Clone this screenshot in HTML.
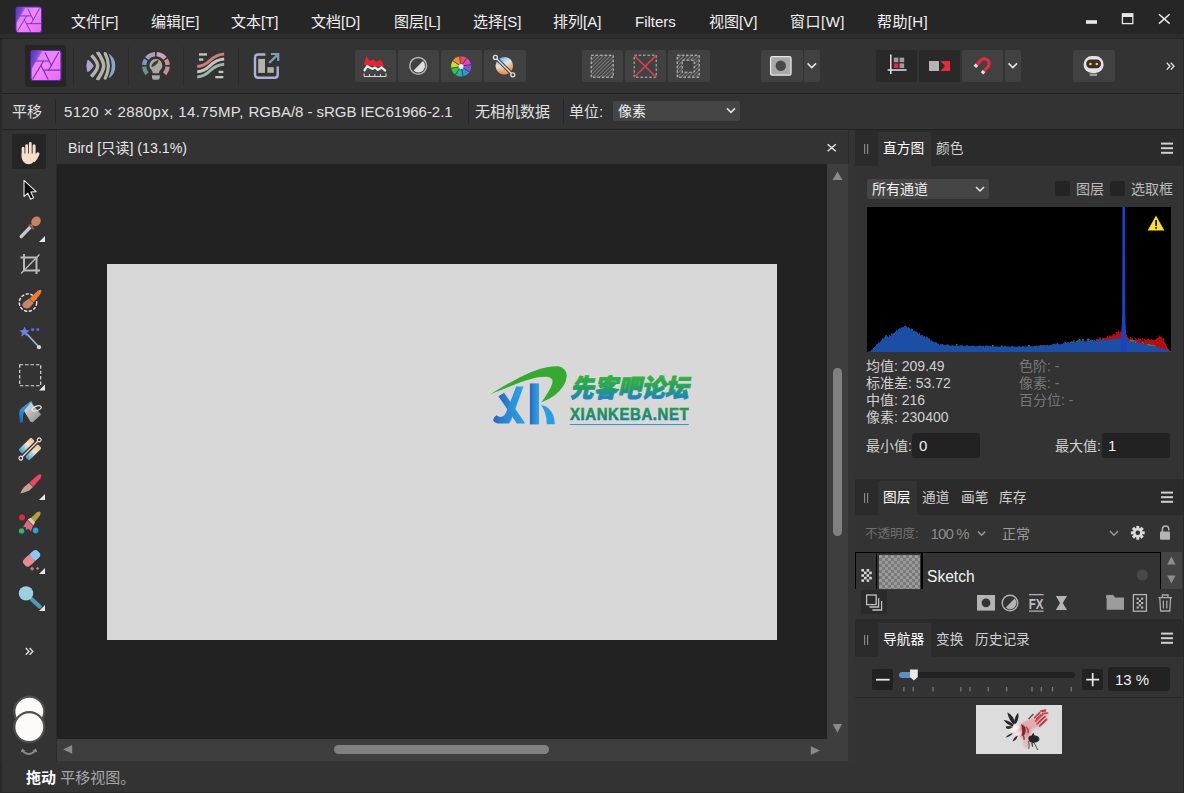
<!DOCTYPE html>
<html lang="zh-CN">
<head>
<meta charset="utf-8">
<title>Affinity Photo</title>
<style>
*{box-sizing:border-box;margin:0;padding:0}
html,body{width:1184px;height:793px;overflow:hidden;background:#333;}
body{position:relative;font-family:"Liberation Sans","Noto Sans CJK SC",sans-serif;font-size:15px;color:#e6e6e6;}
.abs{position:absolute}
svg{display:block;overflow:visible}
/* title bar */
#title{left:0;top:0;width:1184px;height:34px;background:#262626}
#titleline{left:0;top:34px;width:1184px;height:5px;background:#2d2d2d;border-bottom:1px solid #252525}
.menu{top:11px;height:22px;line-height:22px;font-size:15px;color:#f0f0f0;white-space:nowrap}
/* toolbar */
#toolbar{left:0;top:39px;width:1184px;height:54px;background:#333}
#tbline{left:0;top:93px;width:1184px;height:1px;background:#222}
.tb{top:50px;height:32px;width:41px;background:#414141;border-radius:2px}
.tb.dark{background:#292929}
.vsep{width:1px;background:#2a2a2a}
/* context bar */
#ctx{left:0;top:94px;width:1184px;height:35px;background:#333}
#ctxline{left:0;top:129px;width:1184px;height:1.5px;background:#222}
.ctxt{top:101px;height:22px;line-height:22px;font-size:15px;color:#e0e0e0;white-space:nowrap}
/* left tools */
#tools{left:0;top:130px;width:56px;height:632px;background:#333}
/* doc */
#tabbar{left:57px;top:130px;width:791px;height:34px;background:#333;border-top:1px solid #393939;border-left:1px solid #393939}
#canvas{left:57px;top:164px;width:770px;height:575px;background:#222}
#vscroll{left:827px;top:164px;width:21px;height:575px;background:#3e3e3e}
#hscroll{left:57px;top:739px;width:770px;height:22px;background:#3e3e3e}
#corner{left:827px;top:739px;width:21px;height:22px;background:#3e3e3e}
#img{left:107px;top:264px;width:670px;height:376px;background:#d8d8d8}
/* status */
#status{left:0;top:762px;width:1184px;height:31px;background:#333}
/* right */
#right{left:855px;top:130px;width:329px;height:632px;background:#333}
.phead{left:855px;width:329px;height:34px;background:#2b2b2b}
.ptab{font-size:13.7px;color:#cfcfcf;height:34px;line-height:34px;white-space:nowrap}
.ptab.act{background:#333;color:#fff;text-align:left;padding-left:5px}
.small{font-size:14px;white-space:nowrap;line-height:17px}
</style>
</head>
<body>
<!-- TITLE BAR -->
<div id="title" class="abs"></div>
<div id="titleline" class="abs"></div>
<div id="toolbar" class="abs"></div>
<div id="tbline" class="abs"></div>
<div id="ctx" class="abs"></div>
<div id="ctxline" class="abs"></div>
<div id="tools" class="abs"></div>
<div id="tabbar" class="abs"></div>
<div id="canvas" class="abs"></div>
<div id="vscroll" class="abs"></div>
<div id="hscroll" class="abs"></div>
<div id="corner" class="abs"></div>
<div id="img" class="abs"></div>
<div id="status" class="abs"></div>
<div id="right" class="abs"></div>

<!-- MENU -->
<div class="abs menu" style="left:71px">文件[F]</div>
<div class="abs menu" style="left:151px">编辑[E]</div>
<div class="abs menu" style="left:231px">文本[T]</div>
<div class="abs menu" style="left:311px">文档[D]</div>
<div class="abs menu" style="left:394px">图层[L]</div>
<div class="abs menu" style="left:473px">选择[S]</div>
<div class="abs menu" style="left:553px">排列[A]</div>
<div class="abs menu" style="left:635px">Filters</div>
<div class="abs menu" style="left:709px">视图[V]</div>
<div class="abs menu" style="left:790px;letter-spacing:0.5px">窗口[W]</div>
<div class="abs menu" style="left:877px;letter-spacing:0.4px">帮助[H]</div>

<!-- CONTEXT BAR TEXT -->
<div class="abs ctxt" style="left:12px">平移</div>
<div class="abs ctxt" style="left:64px"><span style="letter-spacing:0.42px">5120 × 2880px, 14.75MP, </span><span style="letter-spacing:-0.04px">RGBA/8 - sRGB IEC61966-2.1</span></div>
<div class="abs ctxt" style="left:475px">无相机数据</div>
<div class="abs ctxt" style="left:569px">单位:</div>

<!-- STATUS -->
<div class="abs" style="left:26px;top:767px;font-size:15px;line-height:22px;white-space:nowrap;color:#a8a8a8"><b style="color:#fff">拖动</b> 平移视图。</div>

<!-- DOC TAB -->
<div class="abs" style="left:68px;top:137px;font-size:14.2px;line-height:22px;white-space:nowrap;color:#e6e6e6">Bird [只读] (13.1%)</div>


<!-- LEFT TOOLS -->
<div class="abs" style="left:0;top:39px;width:1.5px;height:754px;background:#282828"></div>
<div class="abs" style="left:0;top:130px;width:2px;height:632px;background:#2b2b2b"></div>
<div class="abs" style="left:12px;top:134px;width:34px;height:35px;background:#252525;border-radius:2px"></div>
<svg class="abs" style="left:0;top:0" width="1184" height="793" viewBox="0 0 1184 793">
 <!-- hand -->
 <g fill="#f3dfcc">
  <rect x="21.7" y="146.8" width="2.8" height="12" rx="1.4"/>
  <rect x="25.3" y="144.2" width="2.8" height="14" rx="1.4"/>
  <rect x="28.9" y="142" width="2.8" height="16" rx="1.4"/>
  <rect x="32.6" y="144.2" width="3" height="14" rx="1.5"/>
  <path d="M21.7 153.4 H35.6 V156.8 a6.95 7.4 0 0 1 -13.9 0 Z"/>
  <path d="M38.6 152.4 q1.4 0.6 0.8 2 q-1.6 4.6 -5 8 l-1.8 -3.6 l3.6 -5.4 q1 -1.6 2.4 -1z"/>
 </g>
 <!-- arrow -->
 <path d="M24 180.3 L24 196.6 L27.8 193.2 L30.6 199.2 L33.6 197.8 L30.8 192 L36.2 191.6 Z" fill="#0a0a0a" stroke="#e8e8e8" stroke-width="1.1" stroke-linejoin="round"/>
 <!-- color picker -->
 <g>
  <line x1="21.2" y1="236.6" x2="31" y2="226.4" stroke="#c9c9c9" stroke-width="3.4" stroke-linecap="round"/>
  <line x1="29.6" y1="225" x2="33.2" y2="228.6" stroke="#8a5a48" stroke-width="2.2" stroke-linecap="round"/>
  <ellipse cx="36" cy="221.4" rx="5.2" ry="4.4" transform="rotate(-45 36 221.4)" fill="#c8805e"/>
  <path d="M45 236 V242 H39 Z" fill="#e8e8e8"/>
 </g>
 <!-- crop -->
 <g stroke="#b9b9b9" stroke-width="2" fill="none">
  <path d="M24 254 V270.5 H40"/>
  <path d="M20.5 257.5 H36.5 V274"/>
  <line x1="21" y1="273.5" x2="39.5" y2="254.5" stroke-width="1.4"/>
 </g>
 <!-- selection brush -->
 <g>
  <circle cx="28" cy="302.6" r="8.7" fill="none" stroke="#e6efe9" stroke-width="1.4" stroke-dasharray="3.2 1.6"/>
  <path d="M29.6 298.4 L37.4 291 Q40.2 289.2 41.2 290 Q42 291.2 40.4 294 L33.6 302.6 Z" fill="#f07c2a"/>
  <path d="M29.2 298.6 L33.6 303 L29.6 307.8 Q25.6 309.4 23.2 307 Q21.6 304.6 23.6 302.2 Z" fill="#c4866a"/>
 </g>
 <!-- wand -->
 <g>
  <line x1="27" y1="334" x2="38.6" y2="346.6" stroke="#9fb4c8" stroke-width="1.6"/>
  <circle cx="39" cy="347.2" r="2.1" fill="#d8d8d8"/>
  <path d="M24.6 326.6 L26 330 L29.6 330.4 L27 332.8 L27.8 336.4 L24.6 334.6 L21.2 336.4 L22 332.8 L19.4 330.4 L23 330 Z" fill="#6f7ee0"/>
  <circle cx="32.6" cy="329.6" r="1.7" fill="#5e6ad0"/>
  <circle cx="37.8" cy="329.6" r="1.5" fill="#5e6ad0"/>
 </g>
 <!-- marquee -->
 <rect x="19.7" y="364.7" width="21" height="21" fill="none" stroke="#e0e0e0" stroke-width="1.15" stroke-dasharray="3.4 2"/>
 <path d="M45 384.5 V390.5 H39 Z" fill="#e8e8e8"/>
 <!-- flood fill -->
 <g>
  <defs><linearGradient id="bk" x1="0" y1="0" x2="1" y2="1"><stop offset="0" stop-color="#e4e4e4"/><stop offset="0.5" stop-color="#b4b4b4"/><stop offset="1" stop-color="#8c8c8c"/></linearGradient>
  <linearGradient id="pt" x1="0" y1="0" x2="0" y2="1"><stop offset="0" stop-color="#38a4ec"/><stop offset="1" stop-color="#1c6cb8"/></linearGradient></defs>
  <path d="M31.4 400.8 L21.6 408 Q19 410 19.2 413 L20 422.4 L23 422.2 Q22.6 415 24.2 411.4 L32.8 404 Z" fill="url(#pt)"/>
  <path d="M31 402.6 L41.2 414.4 L33 422 Q31.6 422.6 30.4 421.4 L24.4 411.6 Q24 410.4 25 409.4 Z" fill="url(#bk)"/>
  <ellipse cx="36.6" cy="408.4" rx="4.8" ry="2.2" transform="rotate(-20 36.6 408.4)" fill="none" stroke="#e8e8e8" stroke-width="1.2"/>
 </g>
 <!-- gradient tool -->
 <g>
  <defs>
   <linearGradient id="gr1" x1="0" y1="0" x2="1" y2="0"><stop offset="0" stop-color="#f2c48a"/><stop offset="0.45" stop-color="#f0e4d2"/><stop offset="1" stop-color="#3c9ad8"/></linearGradient>
  </defs>
  <g transform="rotate(-45 30 449)">
   <rect x="21" y="441.4" width="18" height="5.6" rx="1.6" fill="url(#gr1)" transform="rotate(180 30 444.2)"/>
   <rect x="21" y="451" width="18" height="5.6" rx="1.6" fill="url(#gr1)" transform="rotate(180 30 453.8)"/>
   <line x1="18.4" y1="449" x2="41.6" y2="449" stroke="#e8dcd6" stroke-width="1.3"/>
   <circle cx="17" cy="449" r="1.9" fill="#333" stroke="#e8dcd6" stroke-width="1.2"/>
   <circle cx="43" cy="449" r="1.9" fill="#333" stroke="#e8dcd6" stroke-width="1.2"/>
  </g>
 </g>
 <!-- paint brush -->
 <g>
  <path d="M29.4 482.6 L37.4 475.4 Q40.2 473.8 41.2 474.6 Q42 475.8 40.4 478.6 L33.4 486.8 Z" fill="#ee4460"/>
  <path d="M29 483 L33 487 L29.4 490.6 Q25 492.8 20.4 493.4 Q21.6 489.6 24.6 486.6 Z" fill="#c8a098"/>
  <path d="M45 494 V500 H39 Z" fill="#e8e8e8"/>
 </g>
 <!-- colour replacement brush -->
 <g>
  <circle cx="22" cy="517.4" r="3" fill="#e0264a"/>
  <circle cx="21.6" cy="531" r="2.8" fill="#2db56a"/>
  <circle cx="35.6" cy="530.4" r="2.8" fill="#28a4e4"/>
  <path d="M30.4 518.4 L36.6 512.4 Q39.4 511 40.4 512 Q41.2 513.4 39.6 516 L34.4 522.6 Z" fill="#a8a838"/>
  <path d="M27.6 519.6 L30.6 517.8 L35 522.2 L33.4 525.4 Z" fill="#ecc4b4"/>
  <path d="M27.2 520 L33 525.8 L30.8 531.6 L28.6 528.6 L26.6 530.2 L25.6 527 L23 527.2 Z" fill="#d46c7c"/>
 </g>
 <!-- eraser -->
 <g>
  <g transform="rotate(-42 32 558)">
   <rect x="22" y="553.6" width="10.4" height="8.8" rx="3.4" fill="#e88c94"/>
   <rect x="27" y="553.6" width="5.4" height="8.8" fill="#e88c94"/>
   <rect x="32.4" y="553.6" width="8.6" height="8.8" rx="3.6" fill="#8cc8f4"/>
   <rect x="32.4" y="553.6" width="4" height="8.8" fill="#8cc8f4"/>
  </g>
  <rect x="30.6" y="567.2" width="3" height="3" transform="rotate(45 32.1 568.7)" fill="#c8787c"/>
  <rect x="36.4" y="567.2" width="2.4" height="2.4" transform="rotate(45 37.6 568.4)" fill="#c8787c"/>
  <path d="M45 568 V574 H39 Z" fill="#e8e8e8"/>
 </g>
 <!-- zoom -->
 <g>
  <line x1="32" y1="599.4" x2="39.6" y2="606.6" stroke="#4f9ab4" stroke-width="4.2" stroke-linecap="round"/>
  <circle cx="26" cy="593.4" r="7.2" fill="#9ccfdf"/>
  <path d="M45 605 V611 H39 Z" fill="#e8e8e8"/>
 </g>
 <!-- more -->
 <g stroke="#e8e8e8" stroke-width="1.3" fill="none">
  <path d="M25.8 648 L29 651.4 L25.8 654.8"/>
  <path d="M29.6 648 L32.8 651.4 L29.6 654.8"/>
 </g>
 <!-- colour wells -->
 <circle cx="29.3" cy="711.6" r="15" fill="#fdfafa" stroke="#4e4e4e" stroke-width="2.2"/>
 <circle cx="29.3" cy="727.1" r="15" fill="#fdfafa" stroke="#4e4e4e" stroke-width="2.2"/>
 <path d="M22.4 750.6 Q28.8 757.6 35.2 750.6" fill="none" stroke="#8a8a8a" stroke-width="1.6"/>
 <path d="M20.8 752.6 L22 748.4 L25.6 750.8 Z" fill="#8a8a8a"/>
 <path d="M37.2 752.6 L36 748.4 L32.4 750.8 Z" fill="#8a8a8a"/>
</svg>

<!-- TOOLBAR -->
<div class="abs" style="left:25px;top:45px;width:41px;height:42px;background:#252525;border-radius:2px"></div>
<div class="abs vsep" style="left:73px;top:47px;height:39px"></div>
<div class="abs vsep" style="left:128px;top:47px;height:39px"></div>
<div class="abs vsep" style="left:183px;top:47px;height:39px"></div>
<div class="abs vsep" style="left:238px;top:47px;height:39px"></div>
<div class="abs tb" style="left:355px"></div><div class="abs tb" style="left:398px"></div><div class="abs tb" style="left:441px"></div><div class="abs tb" style="left:484px;width:42px"></div>
<div class="abs tb" style="left:582px"></div><div class="abs tb" style="left:625px"></div><div class="abs tb" style="left:668px;width:42px"></div>
<div class="abs tb" style="left:761px;width:42px"></div><div class="abs tb" style="left:804px;width:16px"></div>
<div class="abs tb dark" style="left:876px"></div><div class="abs tb dark" style="left:919px"></div><div class="abs tb" style="left:962px"></div><div class="abs tb" style="left:1005px;width:16px"></div>
<div class="abs tb" style="left:1073px;width:42px"></div>
<svg class="abs" style="left:0;top:0" width="1184" height="793" viewBox="0 0 1184 793">
 <defs>
  <linearGradient id="lg1" x1="0" y1="0" x2="1" y2="1"><stop offset="0" stop-color="#d884f8"/><stop offset="0.5" stop-color="#f084fa"/><stop offset="1" stop-color="#e868f4"/></linearGradient>
  <linearGradient id="lg2" x1="0" y1="0" x2="0.75" y2="0.45"><stop offset="0" stop-color="#5a34bc"/><stop offset="0.55" stop-color="#7444d0"/><stop offset="1" stop-color="#a860e4"/></linearGradient>
  <g id="aflogo">
   <rect x="0" y="0" width="30" height="30" rx="2.6" fill="url(#lg1)" stroke="#5c30a8" stroke-width="1.2"/>
   <path d="M0.6 0 H11.6 L0 19.5 V2 Q0 0 0.6 0 Z" fill="url(#lg2)"/>
   
   <g stroke="#7a2cb4" stroke-width="1.1" fill="none" stroke-linecap="round">
    <path d="M5.4 10.5 H17.6"/>
    <path d="M14.1 2.3 L20.3 15.1"/>
    <path d="M27.6 2 L17.7 19.6"/>
    <path d="M12.5 19.6 H29.4"/>
    <path d="M9.9 15.1 L17 28.6"/>
    <path d="M12.5 10.5 L2 28"/>
   </g>
  </g>
 </defs>
 <!-- title logo -->
 <g transform="translate(16,7) scale(0.85)"><use href="#aflogo"/></g>
 <!-- persona: photo -->
 <g transform="translate(31,50.5)"><use href="#aflogo"/></g>
 <!-- persona: liquify -->
 <clipPath id="lqc"><circle cx="101" cy="66" r="14.6"/></clipPath>
 <g clip-path="url(#lqc)" fill="none" stroke-linecap="round" stroke-linejoin="round">
  <path d="M85 59.6 Q89 60 93 65.8 Q89 71.8 85 72.2 Z" fill="#b0a4cc" stroke="#b0a4cc" stroke-width="1.4"/>
  <path d="M91.8 55.6 Q97.7 62 97.7 65.8 Q97.7 69.6 91.8 76" stroke="#b2b4aa" stroke-width="3.5"/>
  <path d="M97.8 52.4 Q103.7 61 103.7 65.8 Q103.7 70.6 97.8 79.2" stroke="#b2b4aa" stroke-width="3.5"/>
  <path d="M105.2 53.4 Q111.6 65.8 105.2 78.2" stroke="#b2b4aa" stroke-width="3.2"/>
  <path d="M110.6 54 Q116.6 65.8 110.6 77.6" stroke="#88a6c6" stroke-width="3.6"/>
 </g>
 <!-- persona: develop -->
 <g fill="none" stroke-width="4.3">
  <path d="M155.08 54.03 A11.8 11.8 0 0 0 146.73 58.37" stroke="#ac9cc4"/>
  <path d="M165.07 58.37 A11.8 11.8 0 0 0 156.72 54.03" stroke="#cca4b8"/>
  <path d="M167.67 64.98 A11.8 11.8 0 0 0 165.91 59.55" stroke="#cc948c"/>
  <path d="M164.67 73.70 A11.8 11.8 0 0 0 167.67 66.62" stroke="#c89094"/>
  <path d="M145.89 59.55 A11.8 11.8 0 0 0 144.13 64.98" stroke="#749cc4"/>
  <path d="M144.13 66.62 A11.8 11.8 0 0 0 147.13 73.70" stroke="#64948c"/>
 </g>
 <path d="M155.9 59 a6.4 6.4 0 0 1 4.1 11.3 q-0.9 0.9 -0.9 3 h-6.4 q0 -2.1 -0.9 -3 a6.4 6.4 0 0 1 4.1 -11.3z" fill="#a8aaa2"/>
 <path d="M151.8 66.6 Q152.6 62 158.2 60.6 Q157.4 64.8 151.8 66.6 Z" fill="#3a3a38" stroke="#3a3a38" stroke-width="1" stroke-linejoin="round"/>
 <path d="M152 75.2 H159.8 V77.4 Q159.8 79.8 157.4 79.8 H154.4 Q152 79.8 152 77.4 Z" fill="#a8aaa2"/>
 <!-- persona: tone mapping -->
 <g fill="none" stroke-width="3" stroke-linecap="butt">
  <path d="M197.2 66.6 Q204 66.2 209.8 60.6 Q216.4 54.4 224.2 53.9" stroke="#c87c84"/>
  <path d="M197.2 71.8 Q204 71.4 209.8 65.8 Q216.4 59.6 224.2 59.1" stroke="#c4c6be"/>
  <path d="M197.2 77 Q204 76.6 209.8 71 Q216.4 64.8 224.2 64.3" stroke="#9cb8ac"/>
 </g>
 <g fill="#c6c6c2">
  <rect x="199" y="53.3" width="8" height="2.3"/><rect x="199" y="58.4" width="4.3" height="2.3"/>
  <rect x="218.6" y="70.8" width="4.7" height="2.3"/><rect x="215.3" y="76" width="8" height="2.3"/>
 </g>
 <!-- persona: export -->
 <g>
  <path d="M265.4 54.5 H258 Q255 54.5 255 57.5 V74.7 Q255 77.7 258 77.7 H274.7 Q277.7 77.7 277.7 74.7 V66.4" fill="none" stroke="#aeb2da" stroke-width="2.4"/>
  <rect x="258.2" y="58.9" width="6.8" height="14" fill="#b2b2a8"/>
  <rect x="267.4" y="67.2" width="6.4" height="5.6" fill="#b2b2a8"/>
  <path d="M269.2 63 L277.6 54.6 M271 54 H278.2 V61" fill="none" stroke="#78a0b4" stroke-width="2.2"/>
 </g>
 <!-- auto levels -->
 <g>
  <path d="M364 71.4 L367.2 66 L372.3 68.8 L375.1 67.4 L377.9 69.8 L381.6 67.4 L385.8 71.4 V73 H364 Z" fill="#3b4848"/>
  <path d="M363.9 64.6 L366.3 56 L370 61.2 L373.2 59.3 L376.5 62.1 L380.2 59.8 L382.5 62.6 L383.9 66.4 L378 66.8 L372 65.8 L367.4 65.2 Z" fill="#ea2238"/>
  <path d="M364 71.2 L367.2 66.2 L372.3 68.9 L375.1 67.5 L377.9 69.9 L381.6 67.5 L385.8 71.2" fill="none" stroke="#f2eeea" stroke-width="2.2" stroke-linejoin="round"/>
  <path d="M364.1 73.4 V76.5 H386 V73.4 M369.4 74 V76.5 M374.8 74 V76.5 M380.4 74 V76.5" fill="none" stroke="#ecd4d0" stroke-width="1"/>
 </g>
 <!-- auto contrast -->
 <circle cx="418.2" cy="65.8" r="8.4" fill="none" stroke="#b4b4b4" stroke-width="1.5"/>
 <path d="M413.6 70.6 L423 61 A 6.6 6.6 0 0 1 413.6 70.6 Z" fill="#e0e0e0"/>
 <!-- auto colours -->
 <g transform="translate(461.1,66.4)" stroke="#414141" stroke-width="0.7">
  <path d="M0 0 L-1.82 -10.34 A10.5 10.5 0 0 1 6.02 -8.60 Z" fill="#f04464"/>
  <path d="M0 0 L6.02 -8.60 A10.5 10.5 0 0 1 10.34 -1.82 Z" fill="#e040c4"/>
  <path d="M0 0 L10.34 -1.82 A10.5 10.5 0 0 1 8.60 6.02 Z" fill="#8c50e0"/>
  <path d="M0 0 L8.60 6.02 A10.5 10.5 0 0 1 1.82 10.34 Z" fill="#2c94e4"/>
  <path d="M0 0 L1.82 10.34 A10.5 10.5 0 0 1 -6.02 8.60 Z" fill="#24b8a0"/>
  <path d="M0 0 L-6.02 8.60 A10.5 10.5 0 0 1 -10.34 1.82 Z" fill="#30c450"/>
  <path d="M0 0 L-10.34 1.82 A10.5 10.5 0 0 1 -8.60 -6.02 Z" fill="#c4e030"/>
  <path d="M0 0 L-8.60 -6.02 A10.5 10.5 0 0 1 -1.82 -10.34 Z" fill="#f09030"/>
  <circle r="2.5" fill="#ece8ec" stroke="none"/>
 </g>
 <!-- auto white balance -->
 <g>
  <defs>
   <linearGradient id="wbg" x1="0" y1="0" x2="0" y2="1"><stop offset="0.15" stop-color="#48a4e4"/><stop offset="0.5" stop-color="#e4e4e4"/><stop offset="0.9" stop-color="#ec9450"/></linearGradient>
   <linearGradient id="wbg2" x1="0.2" y1="0" x2="0.9" y2="0.8"><stop offset="0" stop-color="#48a4e4"/><stop offset="0.3" stop-color="#a8d0ec"/><stop offset="0.55" stop-color="#e8e4e0"/><stop offset="0.85" stop-color="#f0a060"/><stop offset="1" stop-color="#e89050"/></linearGradient>
   <clipPath id="wbl"><path d="M480 40 L495.5 57.5 L512.7 74.7 L530 92 H480 Z"/></clipPath>
   <clipPath id="wbr"><path d="M480 40 L495.5 57.5 L512.7 74.7 L530 92 V40 Z"/></clipPath>
  </defs>
  <circle cx="504.3" cy="65.8" r="8.8" fill="url(#wbg)" clip-path="url(#wbl)"/>
  <circle cx="504.3" cy="65.8" r="8.8" fill="url(#wbg2)" clip-path="url(#wbr)"/>
  <line x1="496" y1="58" x2="512.2" y2="74.2" stroke="#414141" stroke-width="3.4"/>
  <line x1="496" y1="58" x2="512.2" y2="74.2" stroke="#e6e0dc" stroke-width="1.3"/>
  <circle cx="495.4" cy="57.4" r="2" fill="#414141" stroke="#e6e0dc" stroke-width="1.3"/>
  <circle cx="512.8" cy="74.8" r="2" fill="#414141" stroke="#e6e0dc" stroke-width="1.3"/>
 </g>
 <!-- select all -->
 <defs>
  <pattern id="hatch" width="2.6" height="2.6" patternUnits="userSpaceOnUse" patternTransform="rotate(-45)"><rect width="2.6" height="1" fill="#7c7c7c"/></pattern>
 </defs>
 <rect x="591.2" y="55.2" width="22" height="22" fill="url(#hatch)"/>
 <rect x="591.2" y="55.2" width="22" height="22" fill="none" stroke="#dadada" stroke-width="0.9" stroke-dasharray="2.6 1.8"/>
 <!-- deselect -->
 <rect x="634.2" y="55.2" width="22" height="22" fill="none" stroke="#cfcfcf" stroke-width="0.9" stroke-dasharray="2.6 1.8"/>
 <path d="M634.4 55.6 L656 77 M656 55.6 L634.4 77" stroke="#dc3c52" stroke-width="1.5"/>
 <!-- invert selection -->
 <path d="M677.2 55.2 h22 v22 h-22 z M682.2 60.2 v12 h12 v-12 z" fill="url(#hatch)" fill-rule="evenodd"/>
 <rect x="677.2" y="55.2" width="22" height="22" fill="none" stroke="#dadada" stroke-width="0.9" stroke-dasharray="2.6 1.8"/>
 <rect x="682.2" y="60.2" width="12" height="12" fill="none" stroke="#dadada" stroke-width="0.9" stroke-dasharray="2.6 1.8"/>
 <!-- quick mask -->
 <rect x="770.6" y="56.6" width="20.4" height="18.6" rx="1.6" fill="#a8a8a8" stroke="#e8e8e8" stroke-width="1.3"/>
 <circle cx="780.8" cy="65.8" r="5.2" fill="#484848"/>
 <path d="M807.6 63.4 L811.8 67.6 L816 63.4" fill="none" stroke="#e4e4e4" stroke-width="1.5"/>
 <!-- force pixel alignment -->
 <g>
  <path d="M890.8 54.6 V74 M887.6 70 H906.6" stroke="#e4e4e4" stroke-width="1.5" fill="none"/>
  <rect x="893.8" y="57.6" width="4.6" height="4.6" fill="#9c9c9c"/><rect x="899.6" y="57.6" width="4.6" height="4.6" fill="#9c9c9c"/>
  <rect x="893.8" y="63.4" width="4.6" height="4.6" fill="#e0283c"/><rect x="899.6" y="63.4" width="4.6" height="4.6" fill="#9c9c9c"/>
 </g>
 <!-- move by whole pixels -->
 <rect x="929" y="61" width="10" height="10" fill="#b4b4b4"/>
 <path d="M940.4 61 H950 V71 H940.4 L945 66 Z" fill="#e8283c"/>
 <!-- snapping -->
 <g transform="translate(982.4 65.8) rotate(42) scale(0.86) translate(-983 -68)">
  <path d="M977.4 72 V64.6 A5.6 5.6 0 0 1 988.6 64.6 V72" fill="none" stroke="#e8283c" stroke-width="3.6"/>
  <rect x="975.4" y="71.4" width="4" height="3.4" fill="#e4e4e4"/>
  <rect x="986.6" y="71.4" width="4" height="3.4" fill="#e4e4e4"/>
 </g>
 <path d="M1008.6 63.4 L1012.8 67.6 L1017 63.4" fill="none" stroke="#e4e4e4" stroke-width="1.5"/>
 <!-- assistant -->
 <g>
  <rect x="1083.6" y="56" width="20" height="17" rx="8.2" fill="#e4e0e4"/>
  <rect x="1086.2" y="59.6" width="14.8" height="8.6" rx="4.2" fill="#3a3020"/>
  <circle cx="1090.4" cy="64" r="1.35" fill="#ecc878"/><circle cx="1096.8" cy="64" r="1.35" fill="#ecc878"/>
  <rect x="1089.6" y="73.4" width="7.6" height="2.6" rx="0.6" fill="#9c9c9c"/>
 </g>
 <!-- toolbar overflow -->
 <g stroke="#e8e8e8" stroke-width="1.3" fill="none">
  <path d="M1166.8 62.8 L1170 66.2 L1166.8 69.6"/><path d="M1170.8 62.8 L1174 66.2 L1170.8 69.6"/>
 </g>
 <!-- window controls -->
 <rect x="1086" y="20.2" width="11" height="3.6" fill="#e8e8e8"/>
 <rect x="1122.4" y="13.8" width="10.4" height="9.8" fill="none" stroke="#e8e8e8" stroke-width="1.3"/>
 <rect x="1122.4" y="13.8" width="10.4" height="3.2" fill="#e8e8e8"/>
 <path d="M1159 14.2 L1169.6 23.6 M1169.6 14.2 L1159 23.6" stroke="#e8e8e8" stroke-width="1.5"/>
</svg>

<!-- RIGHT PANELS -->
<div class="abs" style="left:848px;top:130px;width:7px;height:632px;background:#343434"></div><div class="abs" style="left:848px;top:130px;width:1px;height:34px;background:#2a2a2a"></div>

<!-- histogram panel -->
<div class="abs phead" style="top:130px;height:36px"></div>
<div class="abs ptab act" style="left:878px;top:132px;width:53px;height:34px;line-height:34px">直方图</div>
<div class="abs ptab" style="left:936px;top:132px;line-height:34px">颜色</div>
<div class="abs" style="left:867px;top:179px;width:122px;height:20px;background:#454545;border-radius:2px"></div>
<div class="abs small" style="left:872px;top:180px;color:#f0f0f0;line-height:18px">所有通道</div>
<div class="abs" style="left:1055px;top:181px;width:15px;height:15px;background:#242424;border-radius:2px"></div>
<div class="abs small" style="left:1076px;top:180px;color:#bcbcbc;line-height:18px">图层</div>
<div class="abs" style="left:1110px;top:181px;width:15px;height:15px;background:#242424;border-radius:2px"></div>
<div class="abs small" style="left:1131px;top:180px;color:#bcbcbc;line-height:18px">选取框</div>
<div class="abs" style="left:867px;top:207px;width:304px;height:145px;background:#000"></div>
<svg class="abs" style="left:867px;top:207px" width="304" height="145" viewBox="0 0 304 145">
 <path d="M0 145 L0 145.0 L1 145.0 L1 145.0 L2 145.0 L2 145.0 L3 145.0 L3 145.0 L4 145.0 L4 145.0 L5 145.0 L5 145.0 L6 145.0 L6 145.0 L7 145.0 L7 145.0 L8 145.0 L8 145.0 L9 145.0 L9 145.0 L10 145.0 L10 145.0 L11 145.0 L11 145.0 L12 145.0 L12 145.0 L13 145.0 L13 145.0 L14 145.0 L14 145.0 L15 145.0 L15 145.0 L16 145.0 L16 145.0 L17 145.0 L17 145.0 L18 145.0 L18 145.0 L19 145.0 L19 145.0 L20 145.0 L20 145.0 L21 145.0 L21 145.0 L22 145.0 L22 145.0 L23 145.0 L23 145.0 L24 145.0 L24 145.0 L25 145.0 L25 145.0 L26 145.0 L26 145.0 L27 145.0 L27 145.0 L28 145.0 L28 145.0 L29 145.0 L29 145.0 L30 145.0 L30 145.0 L31 145.0 L31 145.0 L32 145.0 L32 145.0 L33 145.0 L33 145.0 L34 145.0 L34 145.0 L35 145.0 L35 145.0 L36 145.0 L36 145.0 L37 145.0 L37 145.0 L38 145.0 L38 145.0 L39 145.0 L39 145.0 L40 145.0 L40 145.0 L41 145.0 L41 145.0 L42 145.0 L42 145.0 L43 145.0 L43 145.0 L44 145.0 L44 145.0 L45 145.0 L45 145.0 L46 145.0 L46 145.0 L47 145.0 L47 145.0 L48 145.0 L48 145.0 L49 145.0 L49 145.0 L50 145.0 L50 145.0 L51 145.0 L51 145.0 L52 145.0 L52 145.0 L53 145.0 L53 145.0 L54 145.0 L54 145.0 L55 145.0 L55 145.0 L56 145.0 L56 145.0 L57 145.0 L57 145.0 L58 145.0 L58 145.0 L59 145.0 L59 145.0 L60 145.0 L60 145.0 L61 145.0 L61 145.0 L62 145.0 L62 145.0 L63 145.0 L63 145.0 L64 145.0 L64 145.0 L65 145.0 L65 145.0 L66 145.0 L66 145.0 L67 145.0 L67 145.0 L68 145.0 L68 145.0 L69 145.0 L69 145.0 L70 145.0 L70 145.0 L71 145.0 L71 145.0 L72 145.0 L72 145.0 L73 145.0 L73 145.0 L74 145.0 L74 145.0 L75 145.0 L75 145.0 L76 145.0 L76 145.0 L77 145.0 L77 145.0 L78 145.0 L78 145.0 L79 145.0 L79 145.0 L80 145.0 L80 145.0 L81 145.0 L81 145.0 L82 145.0 L82 145.0 L83 145.0 L83 145.0 L84 145.0 L84 145.0 L85 145.0 L85 145.0 L86 145.0 L86 145.0 L87 145.0 L87 145.0 L88 145.0 L88 145.0 L89 145.0 L89 145.0 L90 145.0 L90 145.0 L91 145.0 L91 145.0 L92 145.0 L92 145.0 L93 145.0 L93 145.0 L94 145.0 L94 145.0 L95 145.0 L95 145.0 L96 145.0 L96 145.0 L97 145.0 L97 145.0 L98 145.0 L98 145.0 L99 145.0 L99 145.0 L100 145.0 L100 145.0 L101 145.0 L101 145.0 L102 145.0 L102 145.0 L103 145.0 L103 145.0 L104 145.0 L104 145.0 L105 145.0 L105 145.0 L106 145.0 L106 145.0 L107 145.0 L107 145.0 L108 145.0 L108 145.0 L109 145.0 L109 145.0 L110 145.0 L110 145.0 L111 145.0 L111 145.0 L112 145.0 L112 145.0 L113 145.0 L113 145.0 L114 145.0 L114 145.0 L115 145.0 L115 145.0 L116 145.0 L116 145.0 L117 145.0 L117 145.0 L118 145.0 L118 145.0 L119 145.0 L119 145.0 L120 145.0 L120 145.0 L121 145.0 L121 145.0 L122 145.0 L122 145.0 L123 145.0 L123 145.0 L124 145.0 L124 145.0 L125 145.0 L125 145.0 L126 145.0 L126 145.0 L127 145.0 L127 145.0 L128 145.0 L128 145.0 L129 145.0 L129 145.0 L130 145.0 L130 145.0 L131 145.0 L131 145.0 L132 145.0 L132 145.0 L133 145.0 L133 145.0 L134 145.0 L134 145.0 L135 145.0 L135 145.0 L136 145.0 L136 145.0 L137 145.0 L137 145.0 L138 145.0 L138 145.0 L139 145.0 L139 145.0 L140 145.0 L140 145.0 L141 145.0 L141 145.0 L142 145.0 L142 145.0 L143 145.0 L143 145.0 L144 145.0 L144 145.0 L145 145.0 L145 145.0 L146 145.0 L146 145.0 L147 145.0 L147 145.0 L148 145.0 L148 145.0 L149 145.0 L149 145.0 L150 145.0 L150 145.0 L151 145.0 L151 145.0 L152 145.0 L152 145.0 L153 145.0 L153 145.0 L154 145.0 L154 145.0 L155 145.0 L155 145.0 L156 145.0 L156 145.0 L157 145.0 L157 145.0 L158 145.0 L158 145.0 L159 145.0 L159 145.0 L160 145.0 L160 145.0 L161 145.0 L161 145.0 L162 145.0 L162 145.0 L163 145.0 L163 145.0 L164 145.0 L164 145.0 L165 145.0 L165 145.0 L166 145.0 L166 145.0 L167 145.0 L167 145.0 L168 145.0 L168 145.0 L169 145.0 L169 145.0 L170 145.0 L170 145.0 L171 145.0 L171 145.0 L172 145.0 L172 145.0 L173 145.0 L173 145.0 L174 145.0 L174 145.0 L175 145.0 L175 145.0 L176 145.0 L176 145.0 L177 145.0 L177 145.0 L178 145.0 L178 145.0 L179 145.0 L179 145.0 L180 145.0 L180 145.0 L181 145.0 L181 145.0 L182 145.0 L182 145.0 L183 145.0 L183 145.0 L184 145.0 L184 145.0 L185 145.0 L185 145.0 L186 145.0 L186 145.0 L187 145.0 L187 145.0 L188 145.0 L188 145.0 L189 145.0 L189 145.0 L190 145.0 L190 145.0 L191 145.0 L191 145.0 L192 145.0 L192 145.0 L193 145.0 L193 145.0 L194 145.0 L194 145.0 L195 145.0 L195 145.0 L196 145.0 L196 145.0 L197 145.0 L197 145.0 L198 145.0 L198 145.0 L199 145.0 L199 145.0 L200 145.0 L200 145.0 L201 145.0 L201 145.0 L202 145.0 L202 145.0 L203 145.0 L203 145.0 L204 145.0 L204 145.0 L205 145.0 L205 145.0 L206 145.0 L206 145.0 L207 145.0 L207 145.0 L208 145.0 L208 145.0 L209 145.0 L209 145.0 L210 145.0 L210 145.0 L211 145.0 L211 145.0 L212 145.0 L212 145.0 L213 145.0 L213 145.0 L214 145.0 L214 145.0 L215 145.0 L215 145.0 L216 145.0 L216 145.0 L217 145.0 L217 145.0 L218 145.0 L218 145.0 L219 145.0 L219 145.0 L220 145.0 L220 145.0 L221 145.0 L221 145.0 L222 145.0 L222 145.0 L223 145.0 L223 142.7 L224 142.7 L224 140.7 L225 140.7 L225 139.4 L226 139.4 L226 135.9 L227 135.9 L227 133.6 L228 133.6 L228 133.5 L229 133.5 L229 131.4 L230 131.4 L230 132.6 L231 132.6 L231 132.1 L232 132.1 L232 130.6 L233 130.6 L233 130.8 L234 130.8 L234 132.3 L235 132.3 L235 131.2 L236 131.2 L236 130.7 L237 130.7 L237 130.8 L238 130.8 L238 130.9 L239 130.9 L239 130.2 L240 130.2 L240 128.8 L241 128.8 L241 130.3 L242 130.3 L242 128.6 L243 128.6 L243 128.6 L244 128.6 L244 129.3 L245 129.3 L245 128.2 L246 128.2 L246 127.1 L247 127.1 L247 126.9 L248 126.9 L248 127.6 L249 127.6 L249 124.8 L250 124.8 L250 124.9 L251 124.9 L251 123.8 L252 123.8 L252 125.6 L253 125.6 L253 124.6 L254 124.6 L254 124.9 L255 124.9 L255 122.6 L256 122.6 L256 123.6 L257 123.6 L257 125.8 L258 125.8 L258 126.9 L259 126.9 L259 127.5 L260 127.5 L260 129.6 L261 129.6 L261 131.3 L262 131.3 L262 131.8 L263 131.8 L263 130.1 L264 130.1 L264 131.2 L265 131.2 L265 131.0 L266 131.0 L266 132.7 L267 132.7 L267 132.9 L268 132.9 L268 131.3 L269 131.3 L269 132.1 L270 132.1 L270 133.1 L271 133.1 L271 131.0 L272 131.0 L272 131.9 L273 131.9 L273 131.5 L274 131.5 L274 133.5 L275 133.5 L275 131.6 L276 131.6 L276 133.7 L277 133.7 L277 131.6 L278 131.6 L278 132.7 L279 132.7 L279 132.9 L280 132.9 L280 132.3 L281 132.3 L281 131.3 L282 131.3 L282 133.0 L283 133.0 L283 133.3 L284 133.3 L284 132.2 L285 132.2 L285 132.8 L286 132.8 L286 133.1 L287 133.1 L287 132.9 L288 132.9 L288 132.6 L289 132.6 L289 131.6 L290 131.6 L290 130.7 L291 130.7 L291 130.3 L292 130.3 L292 128.7 L293 128.7 L293 129.5 L294 129.5 L294 129.7 L295 129.7 L295 131.2 L296 131.2 L296 131.4 L297 131.4 L297 134.8 L298 134.8 L298 136.6 L299 136.6 L299 139.1 L300 139.1 L300 140.7 L301 140.7 L301 141.9 L302 141.9 L302 143.4 L303 143.4 L303 144.0 L304 144.0 L304 145.0 L305 145.0 L304 145 Z" fill="#b40c14"/>
 <g fill="#20b038"><rect x="206" y="133.5" width="1.6" height="1.3"/><rect x="210" y="133.7" width="1.6" height="1.3"/><rect x="211" y="132.7" width="1.6" height="1.3"/><rect x="212" y="132.2" width="1.6" height="1.3"/><rect x="215" y="131.8" width="1.6" height="1.3"/><rect x="220" y="131.7" width="1.6" height="1.3"/><rect x="221" y="131.9" width="1.6" height="1.3"/><rect x="263" y="132.8" width="1.6" height="1.3"/><rect x="264" y="133.5" width="1.6" height="1.3"/><rect x="265" y="133.3" width="1.6" height="1.3"/><rect x="266" y="133.5" width="1.6" height="1.3"/><rect x="268" y="134.8" width="1.6" height="1.3"/><rect x="275" y="135.4" width="1.6" height="1.3"/><rect x="280" y="137.2" width="1.6" height="1.3"/><rect x="281" y="137.2" width="1.6" height="1.3"/><rect x="282" y="137.7" width="1.6" height="1.3"/><rect x="283" y="137.8" width="1.6" height="1.3"/><rect x="285" y="137.9" width="1.6" height="1.3"/><rect x="287" y="138.4" width="1.6" height="1.3"/><rect x="80" y="137.6" width="1.6" height="1.3"/><rect x="89" y="137.3" width="1.6" height="1.3"/><rect x="125" y="138.0" width="1.6" height="1.3"/><rect x="134" y="138.7" width="1.6" height="1.3"/><rect x="161" y="137.9" width="1.6" height="1.3"/></g>
 <path d="M0 145 L0 145.0 L1 145.0 L1 144.7 L2 144.7 L2 144.5 L3 144.5 L3 144.3 L4 144.3 L4 142.8 L5 142.8 L5 142.4 L6 142.4 L6 141.0 L7 141.0 L7 140.1 L8 140.1 L8 139.1 L9 139.1 L9 137.3 L10 137.3 L10 136.9 L11 136.9 L11 135.4 L12 135.4 L12 135.4 L13 135.4 L13 134.6 L14 134.6 L14 133.2 L15 133.2 L15 131.2 L16 131.2 L16 131.5 L17 131.5 L17 130.2 L18 130.2 L18 128.2 L19 128.2 L19 128.1 L20 128.1 L20 129.3 L21 129.3 L21 130.2 L22 130.2 L22 128.0 L23 128.0 L23 128.9 L24 128.9 L24 126.3 L25 126.3 L25 126.7 L26 126.7 L26 126.2 L27 126.2 L27 125.5 L28 125.5 L28 124.4 L29 124.4 L29 122.8 L30 122.8 L30 123.4 L31 123.4 L31 122.0 L32 122.0 L32 121.3 L33 121.3 L33 121.3 L34 121.3 L34 120.3 L35 120.3 L35 120.6 L36 120.6 L36 120.0 L37 120.0 L37 119.1 L38 119.1 L38 118.6 L39 118.6 L39 119.6 L40 119.6 L40 120.4 L41 120.4 L41 120.3 L42 120.3 L42 121.1 L43 121.1 L43 121.9 L44 121.9 L44 121.4 L45 121.4 L45 122.1 L46 122.1 L46 123.7 L47 123.7 L47 123.8 L48 123.8 L48 124.5 L49 124.5 L49 124.5 L50 124.5 L50 125.5 L51 125.5 L51 126.9 L52 126.9 L52 126.0 L53 126.0 L53 128.3 L54 128.3 L54 128.2 L55 128.2 L55 128.0 L56 128.0 L56 129.6 L57 129.6 L57 129.3 L58 129.3 L58 130.6 L59 130.6 L59 129.8 L60 129.8 L60 130.0 L61 130.0 L61 131.2 L62 131.2 L62 131.5 L63 131.5 L63 133.5 L64 133.5 L64 133.6 L65 133.6 L65 134.2 L66 134.2 L66 134.7 L67 134.7 L67 135.3 L68 135.3 L68 135.0 L69 135.0 L69 135.2 L70 135.2 L70 136.6 L71 136.6 L71 136.4 L72 136.4 L72 137.8 L73 137.8 L73 136.9 L74 136.9 L74 137.2 L75 137.2 L75 137.1 L76 137.1 L76 137.5 L77 137.5 L77 138.1 L78 138.1 L78 138.0 L79 138.0 L79 137.8 L80 137.8 L80 138.5 L81 138.5 L81 138.1 L82 138.1 L82 138.5 L83 138.5 L83 138.6 L84 138.6 L84 138.7 L85 138.7 L85 138.0 L86 138.0 L86 138.7 L87 138.7 L87 138.7 L88 138.7 L88 138.6 L89 138.6 L89 138.2 L90 138.2 L90 139.0 L91 139.0 L91 138.7 L92 138.7 L92 138.6 L93 138.6 L93 138.3 L94 138.3 L94 138.3 L95 138.3 L95 138.3 L96 138.3 L96 138.9 L97 138.9 L97 138.8 L98 138.8 L98 138.8 L99 138.8 L99 138.3 L100 138.3 L100 138.3 L101 138.3 L101 139.1 L102 139.1 L102 139.1 L103 139.1 L103 139.0 L104 139.0 L104 139.1 L105 139.1 L105 138.8 L106 138.8 L106 138.7 L107 138.7 L107 139.1 L108 139.1 L108 139.3 L109 139.3 L109 138.9 L110 138.9 L110 139.0 L111 139.0 L111 138.8 L112 138.8 L112 138.4 L113 138.4 L113 138.7 L114 138.7 L114 138.9 L115 138.9 L115 138.8 L116 138.8 L116 138.8 L117 138.8 L117 139.4 L118 139.4 L118 138.6 L119 138.6 L119 138.7 L120 138.7 L120 138.6 L121 138.6 L121 138.7 L122 138.7 L122 139.1 L123 139.1 L123 139.1 L124 139.1 L124 139.4 L125 139.4 L125 138.9 L126 138.9 L126 139.5 L127 139.5 L127 139.5 L128 139.5 L128 139.4 L129 139.4 L129 139.5 L130 139.5 L130 139.3 L131 139.3 L131 139.6 L132 139.6 L132 139.7 L133 139.7 L133 139.5 L134 139.5 L134 139.6 L135 139.6 L135 139.3 L136 139.3 L136 139.7 L137 139.7 L137 138.9 L138 138.9 L138 139.1 L139 139.1 L139 139.6 L140 139.6 L140 139.5 L141 139.5 L141 139.4 L142 139.4 L142 139.4 L143 139.4 L143 139.7 L144 139.7 L144 139.0 L145 139.0 L145 138.8 L146 138.8 L146 139.4 L147 139.4 L147 139.4 L148 139.4 L148 139.8 L149 139.8 L149 139.8 L150 139.8 L150 139.6 L151 139.6 L151 139.6 L152 139.6 L152 139.0 L153 139.0 L153 139.7 L154 139.7 L154 139.8 L155 139.8 L155 138.9 L156 138.9 L156 139.3 L157 139.3 L157 139.7 L158 139.7 L158 139.3 L159 139.3 L159 139.8 L160 139.8 L160 139.2 L161 139.2 L161 138.8 L162 138.8 L162 138.9 L163 138.9 L163 139.0 L164 139.0 L164 139.5 L165 139.5 L165 139.3 L166 139.3 L166 139.5 L167 139.5 L167 138.8 L168 138.8 L168 138.9 L169 138.9 L169 138.6 L170 138.6 L170 139.0 L171 139.0 L171 139.0 L172 139.0 L172 138.3 L173 138.3 L173 138.1 L174 138.1 L174 138.1 L175 138.1 L175 138.1 L176 138.1 L176 138.0 L177 138.0 L177 138.0 L178 138.0 L178 138.4 L179 138.4 L179 138.1 L180 138.1 L180 138.1 L181 138.1 L181 138.4 L182 138.4 L182 138.3 L183 138.3 L183 137.9 L184 137.9 L184 137.8 L185 137.8 L185 137.3 L186 137.3 L186 136.9 L187 136.9 L187 137.3 L188 137.3 L188 136.7 L189 136.7 L189 136.6 L190 136.6 L190 136.0 L191 136.0 L191 137.1 L192 137.1 L192 137.3 L193 137.3 L193 137.2 L194 137.2 L194 137.1 L195 137.1 L195 137.0 L196 137.0 L196 136.0 L197 136.0 L197 135.3 L198 135.3 L198 135.3 L199 135.3 L199 135.9 L200 135.9 L200 135.4 L201 135.4 L201 135.0 L202 135.0 L202 136.3 L203 136.3 L203 135.0 L204 135.0 L204 134.3 L205 134.3 L205 134.4 L206 134.4 L206 134.4 L207 134.4 L207 134.8 L208 134.8 L208 135.2 L209 135.2 L209 133.9 L210 133.9 L210 134.6 L211 134.6 L211 133.6 L212 133.6 L212 133.1 L213 133.1 L213 134.1 L214 134.1 L214 133.9 L215 133.9 L215 132.7 L216 132.7 L216 133.1 L217 133.1 L217 134.2 L218 134.2 L218 134.3 L219 134.3 L219 134.2 L220 134.2 L220 132.6 L221 132.6 L221 132.8 L222 132.8 L222 134.1 L223 134.1 L223 132.7 L224 132.7 L224 132.4 L225 132.4 L225 133.0 L226 133.0 L226 133.6 L227 133.6 L227 133.1 L228 133.1 L228 133.9 L229 133.9 L229 134.1 L230 134.1 L230 132.2 L231 132.2 L231 132.8 L232 132.8 L232 132.9 L233 132.9 L233 132.1 L234 132.1 L234 133.0 L235 133.0 L235 132.1 L236 132.1 L236 132.1 L237 132.1 L237 133.3 L238 133.3 L238 133.2 L239 133.2 L239 133.1 L240 133.1 L240 133.1 L241 133.1 L241 132.3 L242 132.3 L242 132.8 L243 132.8 L243 132.4 L244 132.4 L244 132.9 L245 132.9 L245 131.2 L246 131.2 L246 132.2 L247 132.2 L247 131.8 L248 131.8 L248 131.5 L249 131.5 L249 130.7 L250 130.7 L250 131.6 L251 131.6 L251 130.7 L252 130.7 L252 131.8 L253 131.8 L253 131.9 L254 131.9 L254 132.1 L255 132.1 L255 133.3 L256 133.3 L256 132.6 L257 132.6 L257 133.3 L258 133.3 L258 133.9 L259 133.9 L259 132.5 L260 132.5 L260 133.9 L261 133.9 L261 133.5 L262 133.5 L262 133.1 L263 133.1 L263 133.7 L264 133.7 L264 134.4 L265 134.4 L265 134.2 L266 134.2 L266 134.4 L267 134.4 L267 134.2 L268 134.2 L268 135.7 L269 135.7 L269 135.1 L270 135.1 L270 135.9 L271 135.9 L271 136.1 L272 136.1 L272 135.4 L273 135.4 L273 136.2 L274 136.2 L274 136.4 L275 136.4 L275 136.3 L276 136.3 L276 136.6 L277 136.6 L277 137.4 L278 137.4 L278 137.5 L279 137.5 L279 137.8 L280 137.8 L280 138.1 L281 138.1 L281 138.1 L282 138.1 L282 138.6 L283 138.6 L283 138.7 L284 138.7 L284 139.0 L285 139.0 L285 138.8 L286 138.8 L286 139.3 L287 139.3 L287 139.3 L288 139.3 L288 139.5 L289 139.5 L289 140.4 L290 140.4 L290 140.3 L291 140.3 L291 140.2 L292 140.2 L292 140.5 L293 140.5 L293 141.4 L294 141.4 L294 141.6 L295 141.6 L295 141.5 L296 141.5 L296 142.0 L297 142.0 L297 142.2 L298 142.2 L298 142.7 L299 142.7 L299 142.5 L300 142.5 L300 142.7 L301 142.7 L301 143.1 L302 143.1 L302 144.3 L303 144.3 L303 144.5 L304 144.5 L304 145.0 L305 145.0 L304 145 Z" fill="#1c4ea6"/>
 <path d="M253.4 145 L254.4 126 L255.2 108 L255.5 0 H258.1 L258.3 108 L259 126 L260.2 145 Z" fill="#1a42c2"/>
 <path d="M289 8.4 L297.4 23.6 H280.6 Z" fill="#f8e030"/>
 <rect x="288.2" y="13" width="1.7" height="6" fill="#111"/><rect x="288.2" y="20" width="1.7" height="1.8" fill="#111"/>
</svg>
<div class="abs small" style="left:866px;top:358px;color:#d0d0d0">均值: 209.49<br>标准差: 53.72<br>中值: 216<br>像素: 230400</div>
<div class="abs small" style="left:1019px;top:358px;color:#777">色阶: -<br>像素: -<br>百分位: -</div>
<div class="abs small" style="left:866px;top:438px;color:#d0d0d0">最小值:</div>
<div class="abs" style="left:912px;top:433px;width:68px;height:25px;background:#222;border-radius:3px"></div>
<div class="abs" style="left:919px;top:436px;font-size:15px;line-height:19px;color:#f0f0f0">0</div>
<div class="abs small" style="left:1055px;top:438px;color:#d0d0d0">最大值:</div>
<div class="abs" style="left:1102px;top:433px;width:68px;height:25px;background:#222;border-radius:3px"></div>
<div class="abs" style="left:1108px;top:436px;font-size:15px;line-height:19px;color:#f0f0f0">1</div>
<!-- layers panel -->
<div class="abs phead" style="top:479px;height:36px"></div>
<div class="abs ptab act" style="left:878px;top:481px;width:39px;height:34px;line-height:34px">图层</div>
<div class="abs ptab" style="left:922px;top:481px;line-height:34px">通道</div>
<div class="abs ptab" style="left:961px;top:481px;line-height:34px">画笔</div>
<div class="abs ptab" style="left:999px;top:481px;line-height:34px">库存</div>
<div class="abs small" style="left:865px;top:525.5px;color:#707070;font-size:12.5px">不透明度:</div>
<div class="abs" style="left:930.6px;top:524px;font-size:15px;line-height:19px;color:#8c8c8c;white-space:nowrap;letter-spacing:-0.9px">100 %</div>
<div class="abs small" style="left:1002px;top:526px;color:#9a9a9a;font-size:14px">正常</div>
<div class="abs" style="left:855px;top:552px;width:306px;height:37px;background:#000"></div>
<div class="abs" style="left:856px;top:553px;width:20.4px;height:36px;background:#333"></div>
<div class="abs" style="left:877.4px;top:553px;width:43.6px;height:36px;background:#333"></div>
<div class="abs" style="left:923px;top:553px;width:237px;height:36px;background:#333"></div>
<div class="abs" style="left:1161px;top:552px;width:21px;height:37px;background:#444"></div>
<div class="abs" style="left:879px;top:555px;width:41px;height:34px;background-color:#8a8a8a;background-image:conic-gradient(#7a7a7a 25%,#9a9a9a 0 50%,#7a7a7a 0 75%,#9a9a9a 0);background-size:6px 6px"></div>
<div class="abs" style="left:927px;top:565.5px;font-size:15.6px;line-height:22px;color:#f2f2f2;white-space:nowrap">Sketch</div>
<div class="abs" style="left:861px;top:590px;width:26px;height:24px;background:#2a2a2a;border-radius:2px"></div>
<!-- navigator panel -->
<div class="abs" style="left:855px;top:619px;width:327px;height:2px;background:#2a2a2a"></div>
<div class="abs phead" style="top:621px;height:36px"></div>
<div class="abs ptab act" style="left:878px;top:623px;width:53px;height:34px;line-height:34px">导航器</div>
<div class="abs ptab" style="left:936px;top:623px;line-height:34px">变换</div>
<div class="abs ptab" style="left:975px;top:623px;line-height:34px">历史记录</div>
<div class="abs" style="left:872px;top:669px;width:21px;height:21px;background:#222;border-radius:2px"></div>
<div class="abs" style="left:1082px;top:669px;width:21px;height:21px;background:#222;border-radius:2px"></div>
<div class="abs" style="left:899px;top:672px;width:176px;height:6px;background:#222;border-radius:3px"></div>
<div class="abs" style="left:899px;top:672px;width:14px;height:6px;background:#5b8fc6;border-radius:3px"></div>
<div class="abs" style="left:1108px;top:667px;width:62px;height:24px;background:#222;border-radius:3px"></div>
<div class="abs" style="left:1115px;top:670px;font-size:15px;line-height:19px;color:#f0f0f0;white-space:nowrap">13 %</div>
<div class="abs" style="left:855px;top:697px;width:327px;height:1px;background:#282828"></div>
<div class="abs" style="left:976px;top:705px;width:86px;height:49px;background:#dcdcdc"></div>
<svg class="abs" style="left:976px;top:705px" width="86" height="49" viewBox="0 0 86 49">
 <defs><filter id="bl" x="-20%" y="-20%" width="140%" height="140%"><feGaussianBlur stdDeviation="0.5"/></filter>
 <filter id="bl2" x="-30%" y="-30%" width="160%" height="160%"><feGaussianBlur stdDeviation="1.2"/></filter></defs>
 <g filter="url(#bl2)">
  <ellipse cx="64" cy="14" rx="10" ry="6.4" fill="#e4b0b0" opacity="0.9" transform="rotate(-48 64 14)"/>
  <ellipse cx="52" cy="21" rx="13" ry="5.4" fill="#e4a8ae" transform="rotate(-28 52 21)"/>
  <ellipse cx="48" cy="27" rx="7" ry="6" fill="#dc98a0"/>
  <ellipse cx="38.6" cy="23.6" rx="5.4" ry="3.2" fill="#f8f2f2" transform="rotate(-25 38.6 23.6)"/>
  <ellipse cx="42" cy="29" rx="4" ry="2.4" fill="#efe4e4" transform="rotate(-30 42 29)"/>
  <ellipse cx="50.6" cy="37" rx="3.6" ry="6" fill="#dcb4b8" opacity="0.85"/>
 </g>
 <g filter="url(#bl)">
  <path d="M31.3 7.3 Q37.6 10.6 39.4 18.6 L37.2 19.2 Q32.6 14.6 31.3 7.3 Z" fill="#262626"/>
  <path d="M42.1 7.8 Q43.6 13.6 39.8 19 L38.2 17.6 Q38.6 11.6 42.1 7.8 Z" fill="#262626"/>
  <path d="M27.6 15 Q33.6 15.6 37.8 20 L36.4 21.4 Q31 19.6 27.6 15 Z" fill="#262626"/>
  <path d="M29.5 21.4 Q33.6 20.6 37 22 Q33.6 24.6 30.4 23.6 Z" fill="#343434"/>
  <path d="M29.4 32.6 Q32 29 37 28 Q34.6 31.6 29.4 32.6 Z" fill="#2e2e2e"/>
  <path d="M36.6 36.6 Q37.6 32 42 30.4 Q41 34.6 36.6 36.6 Z" fill="#2e2e2e"/>
  <path d="M45 19 Q50.6 21 49.6 26.6 Q48.6 31.6 45.6 30.6 Q47 25.6 45 19 Z" fill="#84242c"/>
  <path d="M49.6 22 Q53 24 52 28" stroke="#a83c44" stroke-width="1.4" fill="none"/>
  <path d="M46 30 Q48.6 31 48 35" stroke="#8c2c34" stroke-width="1.2" fill="none"/>
  <g stroke="#c04850" stroke-width="1.7" fill="none" stroke-linecap="round">
   <path d="M58.6 12.6 L63.6 8"/><path d="M59.6 16 L66.6 9.6"/><path d="M61 19 L69 11.6"/><path d="M63.6 21 L70.6 14.6"/><path d="M64.6 6 L69.6 5"/><path d="M66.6 8.6 L71.6 8"/>
  </g>
  <g stroke="#9c2830" stroke-width="0.9" fill="none">
   <path d="M60 14 L65 9.6"/><path d="M62 17.6 L68.6 11.6"/><path d="M64.6 20 L70.6 13.6"/><path d="M66 6.6 L70 6"/>
  </g>
  <path d="M52.6 14 L57.4 9" stroke="#5a4a48" stroke-width="1.3"/>
  <path d="M52.4 34 Q52 31 55.6 30.6 L57.4 27.6 L58.6 30.4 Q63.6 30.6 63.4 34.6 Q62.6 37.6 58.6 37.4 Q57 39 55.6 37.4 Q52.6 37 52.4 34 Z" fill="#262626"/>
  <path d="M52.6 36 Q53.6 40 52.8 44" stroke="#6a4246" stroke-width="1" fill="none"/>
  <path d="M58 37.6 Q60 41.6 61.8 45" stroke="#4a3838" stroke-width="0.9" fill="none"/>
  <path d="M55.8 37.6 L56.6 41.6" stroke="#3a3030" stroke-width="1.2" fill="none"/>
 </g>
</svg>
<svg class="abs" style="left:0;top:0" width="1184" height="793" viewBox="0 0 1184 793">
 <!-- grips -->
 <g stroke="#8a8a8a" stroke-width="1.1">
  <path d="M864.6 144 V154 M867.6 144 V154"/>
  <path d="M864.6 493 V503 M867.6 493 V503"/>
  <path d="M864.6 635 V645 M867.6 635 V645"/>
 </g>
 <!-- hamburgers -->
 <g fill="#d0d0d0">
  <rect x="1161" y="142.6" width="12" height="2"/><rect x="1161" y="147.2" width="12" height="2"/><rect x="1161" y="151.8" width="12" height="2"/>
  <rect x="1161" y="491.6" width="12" height="2"/><rect x="1161" y="496.2" width="12" height="2"/><rect x="1161" y="500.8" width="12" height="2"/>
  <rect x="1161" y="632.6" width="12" height="2"/><rect x="1161" y="637.2" width="12" height="2"/><rect x="1161" y="641.8" width="12" height="2"/>
 </g>
 <!-- chevrons -->
 <g fill="none" stroke="#e4e4e4" stroke-width="1.5">
  <path d="M976 187 L980 191 L984 187"/>
 </g>
 <g fill="none" stroke="#9a9a9a" stroke-width="1.4">
  <path d="M978 531.4 L981.6 535.2 L985.2 531.4"/>
  <path d="M1110 531 L1114 535.2 L1118 531"/>
 </g>
 <!-- gear -->
 <g transform="translate(1137.8,532.8)">
  <g fill="#dcdcdc">
   <rect x="-1.5" y="-6.9" width="3" height="13.8"/>
   <rect x="-1.5" y="-6.9" width="3" height="13.8" transform="rotate(45)"/>
   <rect x="-1.5" y="-6.9" width="3" height="13.8" transform="rotate(90)"/>
   <rect x="-1.5" y="-6.9" width="3" height="13.8" transform="rotate(135)"/>
   <circle r="4.7"/>
  </g>
  <circle r="2.3" fill="#333"/>
 </g>
 <!-- lock -->
 <path d="M1162.4 532 V529.4 A3.2 3.4 0 0 1 1168.8 529.4 V530.6" fill="none" stroke="#b4b4b4" stroke-width="1.5"/>
 <rect x="1160" y="531.6" width="10" height="8.2" rx="1" fill="#b4b4b4"/>
 <!-- layer visibility checker -->
 <g fill="#d8d8d8">
  <rect x="861.4" y="569" width="2.6" height="2.6"/><rect x="866.6" y="569" width="2.6" height="2.6"/>
  <rect x="864" y="571.6" width="2.6" height="2.6"/><rect x="869.2" y="571.6" width="2.6" height="2.6"/>
  <rect x="861.4" y="574.2" width="2.6" height="2.6"/><rect x="866.6" y="574.2" width="2.6" height="2.6"/>
  <rect x="864" y="576.8" width="2.6" height="2.6"/><rect x="869.2" y="576.8" width="2.6" height="2.6"/>
  <rect x="861.4" y="579.4" width="2.6" height="2.4"/><rect x="866.6" y="579.4" width="2.6" height="2.4"/>
 </g>
 <circle cx="1142.2" cy="575" r="5.6" fill="#484848"/>
 <path d="M1171.4 556.6 L1175.6 564.4 H1167.2 Z" fill="#8c8c8c"/>
 <path d="M1171.4 583.4 L1175.6 575.6 H1167.2 Z" fill="#8c8c8c"/>
 <!-- layer toolbar icons -->
 <g fill="none" stroke="#c0c0c0" stroke-width="1.3">
  <rect x="866.6" y="595" width="9.6" height="9.6" fill="#2a2a2a"/>
  <path d="M878.6 598 V607 H869.4"/>
  <path d="M881.6 601 V610 H872.4"/>
 </g>
 <rect x="977" y="595" width="18" height="15.6" fill="#b4b4b4"/>
 <circle cx="986" cy="602.8" r="4.4" fill="#333"/>
 <circle cx="1010" cy="603" r="7.8" fill="none" stroke="#b4b4b4" stroke-width="1.4"/>
 <path d="M1005.8 607.4 L1014.6 598.6 A6.2 6.2 0 0 1 1005.8 607.4 Z" fill="#b4b4b4"/>
 <path d="M1029 594.6 H1043.6 M1029 611.2 H1043.6" stroke="#b4b4b4" stroke-width="1.2"/>
 <text x="1028.8" y="609" font-family="Liberation Sans, sans-serif" font-weight="bold" font-size="15.2" fill="#c0c0c0" textLength="14.8" lengthAdjust="spacingAndGlyphs">FX</text>
 <path d="M1055.8 596 H1067 L1062.8 603 L1067 610 H1055.8 L1060 603 Z" fill="#b4b4b4"/>
 <path d="M1106.6 598 V609.8 H1124 V597.6 H1114.6 L1113.2 595.4 H1106.6 Z" fill="#9c9c9c"/>
 <path d="M1106.6 598 V595.4 H1113.2 L1114.6 597.6" fill="none" stroke="#9c9c9c" stroke-width="1"/>
 <rect x="1133.4" y="594.6" width="13" height="16.6" fill="none" stroke="#b4b4b4" stroke-width="1.3"/>
 <g fill="#b4b4b4">
  <rect x="1136.6" y="597.6" width="2.2" height="2.2"/><rect x="1141" y="597.6" width="2.2" height="2.2"/>
  <rect x="1138.8" y="599.8" width="2.2" height="2.2"/>
  <rect x="1136.6" y="602" width="2.2" height="2.2"/><rect x="1141" y="602" width="2.2" height="2.2"/>
  <rect x="1138.8" y="604.2" width="2.2" height="2.2"/>
  <rect x="1136.6" y="606.4" width="2.2" height="2.2"/><rect x="1141" y="606.4" width="2.2" height="2.2"/>
 </g>
 <g fill="none" stroke="#a8a8a8" stroke-width="1.3">
  <path d="M1158.4 597.6 H1172"/>
  <path d="M1162.4 597.4 V595 H1168 V597.4"/>
  <path d="M1159.8 598 L1160.6 611 H1169.8 L1170.6 598"/>
  <path d="M1163.4 600.4 V608.4 M1166.8 600.4 V608.4"/>
 </g>
 <!-- navigator -->
 <rect x="876" y="678.8" width="13.6" height="1.8" fill="#e8e8e8"/>
 <path d="M1086.2 679.6 H1099.2 M1092.7 673 V686.2" stroke="#e8e8e8" stroke-width="1.7"/>
 <path d="M910 669.4 H917.8 V677 L913.9 680.6 L910 677 Z" fill="#e8e8e8"/>
 <g stroke="#7c7c7c" stroke-width="1.2">
  <path d="M903.9 687 V691.6 M913.2 687 V691.6 M933 687 V691.6 M960.9 687 V691.6 M970 687 V691.6 M988.2 687 V691.6 M1006.6 687 V691.6 M1032 687 V691.6 M1041.3 687 V691.6 M1052.5 687 V691.6 M1071.2 687 V691.6"/>
 </g>
</svg>

<!-- CONTEXT BAR EXTRAS -->
<div class="abs" style="left:0;top:94px;width:2px;height:36px;background:#2a2a2a"></div>
<div class="abs vsep" style="left:55px;top:99px;height:25px;background:#262626"></div>
<div class="abs vsep" style="left:468px;top:99px;height:25px;background:#262626"></div>
<div class="abs vsep" style="left:563px;top:99px;height:25px;background:#262626"></div>
<div class="abs" style="left:613px;top:101px;width:127px;height:20px;background:#454545;border-radius:2px"></div>
<div class="abs small" style="left:618px;top:102px;color:#f0f0f0;line-height:18px">像素</div>
<!-- DOC EXTRAS -->
<div class="abs" style="left:56px;top:130px;width:1px;height:632px;background:#2c2c2c"></div>

<div class="abs" style="left:833px;top:368px;width:9px;height:168px;background:#808080;border-radius:5px"></div>
<div class="abs" style="left:334px;top:745px;width:215px;height:9px;background:#808080;border-radius:5px"></div>
<svg class="abs" style="left:0;top:0" width="1184" height="793" viewBox="0 0 1184 793">
 <path d="M827.6 144.2 L835.8 151.2 M835.8 144.2 L827.6 151.2" stroke="#e8e8e8" stroke-width="1.4"/>
 <path d="M727 108.4 L731 112.4 L735 108.4" fill="none" stroke="#e4e4e4" stroke-width="1.5"/>
 <g fill="#8a8a8a">
  <path d="M837.5 171.6 L842.4 180 H832.6 Z"/>
  <path d="M837.4 732.8 L842 724 H832.8 Z"/>
  <path d="M63.2 749.4 L72.2 745 V753.8 Z"/>
  <path d="M820 750.6 L810.8 746.2 V755 Z"/>
 </g>
 <!-- document artwork -->
 <defs>
  <linearGradient id="kx" x1="0" y1="0" x2="1" y2="0"><stop offset="0" stop-color="#2d66bc"/><stop offset="0.5" stop-color="#2a8ad8"/><stop offset="1" stop-color="#2aa4ea"/></linearGradient>
  <linearGradient id="cn" x1="0" y1="0" x2="0" y2="1"><stop offset="0.1" stop-color="#36b040"/><stop offset="0.5" stop-color="#26a060"/><stop offset="0.95" stop-color="#1c80d0"/></linearGradient>
  <linearGradient id="en" x1="0" y1="0" x2="0" y2="1"><stop offset="0.1" stop-color="#20a044"/><stop offset="1" stop-color="#167a9a"/></linearGradient>
 </defs>
 <path d="M490 394.4 Q501 387.6 512.5 381.2 Q521 376.4 530.1 372.4 Q539 368.8 547.8 367.1 Q553.6 366 558.4 366.2 Q562.6 366.8 564.6 369.7 Q567 372.4 566.8 375.9 Q566.4 380.8 563.7 385.6 Q560.2 391 554.8 395.3 Q549 399.6 541.2 402.4 Q545 397.6 547.8 392.7 Q550.8 388 552.2 383.8 Q553 380.6 551.8 379 Q550.4 377 546.9 376.8 Q541 376.6 535.4 377.7 Q528 379.6 521.3 382.1 Q512 385.6 503.7 389.1 Q497 391.6 490 394.4 Z" fill="#35a930"/>
 <path d="M498.4 396.2 L504.1 392.8 L525.3 423.4 H516.9 Z" fill="url(#kx)"/>
 <path d="M516.2 386.4 H523.5 L512.5 416.5 Q511.4 420.6 509 423.4 H497.5 Q493.6 422.4 493.1 420 Q493.6 416.6 496.6 415.2 Q499 417.6 502.4 416.6 Q505 415.4 506.3 412.1 Z" fill="url(#kx)"/>
 <rect x="529.9" y="383.4" width="9.1" height="41" fill="url(#kx)"/>
 <path d="M541.2 405 Q545 405.6 547.8 407.7 Q551.2 410.6 553.1 414.7 Q554.6 418.6 554.8 424.2 H546.9 Q546.8 418 545.1 413 Q543.6 408.6 541.2 405 Z" fill="#2a9ce6"/>
 <text x="570" y="396.6" font-family="'Liberation Sans','Noto Sans CJK SC',sans-serif" font-weight="900" font-style="italic" font-size="25" fill="url(#cn)" stroke="url(#cn)" stroke-width="0.9" stroke-linejoin="round" textLength="118.6" lengthAdjust="spacingAndGlyphs">先客吧论坛</text>
 <g transform="translate(570,419.6) scale(1,1.12)"><text x="0" y="0" font-family="'Liberation Sans',sans-serif" font-weight="bold" font-size="15" fill="url(#en)" stroke="url(#en)" stroke-width="0.5" textLength="118.6" lengthAdjust="spacing">XIANKEBA.NET</text></g>
 <rect x="569.8" y="424" width="119" height="1" fill="#3a8fd0"/>
</svg>
<div class="abs" style="left:1182.5px;top:39px;width:1.5px;height:754px;background:#282828"></div>
<div class="abs" style="left:0;top:791.6px;width:1184px;height:1.4px;background:#282828"></div>
</body>
</html>
